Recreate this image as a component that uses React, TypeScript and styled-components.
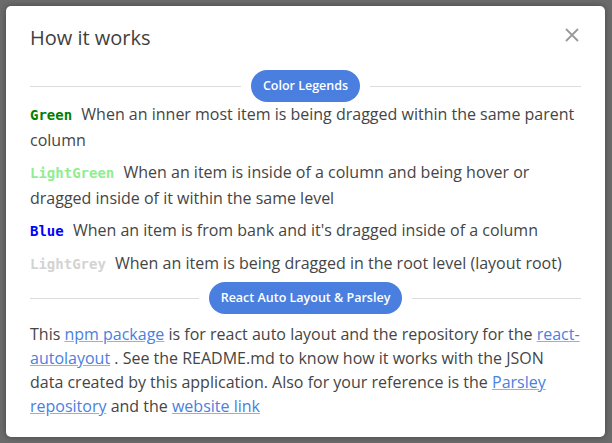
import React from "react";
import styled, { createGlobalStyle } from "styled-components";

const Global = createGlobalStyle`
  html, body { margin: 0; padding: 0; }
  body {
    background: #6b6b6b;
    font-family: "Open Sans", "Lato", sans-serif;
    width: 612px;
    height: 443px;
    overflow: hidden;
  }
`;

const Backdrop = styled.div`
  padding: 6px 7px 6px 6px;
`;

const Modal = styled.div`
  width: 599px;
  height: 431px;
  box-sizing: border-box;
  background: #ffffff;
  border-radius: 5px;
  box-shadow: 0 0 6px rgba(0, 0, 0, 0.35);
  padding: 0 24px;
  color: #454545;
`;

const Header = styled.div`
  display: flex;
  align-items: flex-start;
  justify-content: space-between;
  height: 64px;
  padding-top: 18px;
  box-sizing: border-box;
`;

const Title = styled.h2`
  margin: 0;
  font-size: 20px;
  line-height: 28px;
  font-weight: 400;
  color: #3f3f3f;
`;

const Close = styled.button`
  border: none;
  background: none;
  padding: 0;
  width: 16px;
  height: 16px;
  display: flex;
  margin: 3px 1px 0 0;
  cursor: pointer;
`;

const Divider = styled.div`
  display: flex;
  align-items: center;
  gap: 10px;
`;

const Line = styled.div`
  flex: 1;
  height: 1px;
  background: #dcdcdc;
`;

const Pill = styled.span`
  height: 32px;
  line-height: 32px;
  padding: 0 12px;
  border-radius: 16px;
  background: #4a7fe0;
  color: #ffffff;
  font-size: 12.5px;
  font-weight: 600;
  white-space: nowrap;
`;

const LegendList = styled.div`
  display: flex;
  flex-direction: column;
  gap: 7px;
  padding-bottom: 5px;
`;

const Legend = styled.p`
  margin: 0;
  font-size: 16px;
  line-height: 25px;
`;

const Key = styled.code<{ $color: string }>`
  font-family: "DejaVu Sans Mono", "Liberation Mono", monospace;
  font-weight: 700;
  font-size: 14px;
  color: ${(p) => p.$color};
  margin-right: 5px;
`;

const Para = styled.p`
  margin: 8px 0 0 0;
  font-size: 16px;
  line-height: 24px;
`;

const Link = styled.a`
  color: #4a80e0;
  text-decoration: underline;
  text-decoration-color: #8fb0ee;
`;

const legends = [
  { name: "Green", color: "#008000", text: "When an inner most item is being dragged within the same parent column" },
  { name: "LightGreen", color: "#90ee90", text: "When an item is inside of a column and being hover or dragged inside of it within the same level" },
  { name: "Blue", color: "#0000ff", text: "When an item is from bank and it's dragged inside of a column" },
  { name: "LightGrey", color: "#d3d3d3", text: "When an item is being dragged in the root level (layout root)" },
];

export default function App() {
  return (
    <>
      <Global />
      <Backdrop>
        <Modal>
          <Header>
            <Title>How it works</Title>
            <Close aria-label="close">
              <svg width="16" height="16" viewBox="0 0 16 16">
                <path d="M2 2 L14 14 M14 2 L2 14" stroke="#9a9a9a" strokeWidth="1.8" />
              </svg>
            </Close>
          </Header>
          <Divider>
            <Line />
            <Pill>Color Legends</Pill>
            <Line />
          </Divider>
          <LegendList>
            {legends.map((l) => (
              <Legend key={l.name}>
                <Key $color={l.color}>{l.name}</Key> {l.text}
              </Legend>
            ))}
          </LegendList>
          <Divider>
            <Line />
            <Pill>React Auto Layout &amp; Parsley</Pill>
            <Line />
          </Divider>
          <Para>
            This <Link href="#">npm package</Link> is for react auto layout and the repository for the{" "}
            <Link href="#">react-autolayout</Link> . See the README.md to know how it works with the JSON data created by
            this application. Also for your reference is the <Link href="#">Parsley repository</Link> and the{" "}
            <Link href="#">website link</Link>
          </Para>
        </Modal>
      </Backdrop>
    </>
  );
}
